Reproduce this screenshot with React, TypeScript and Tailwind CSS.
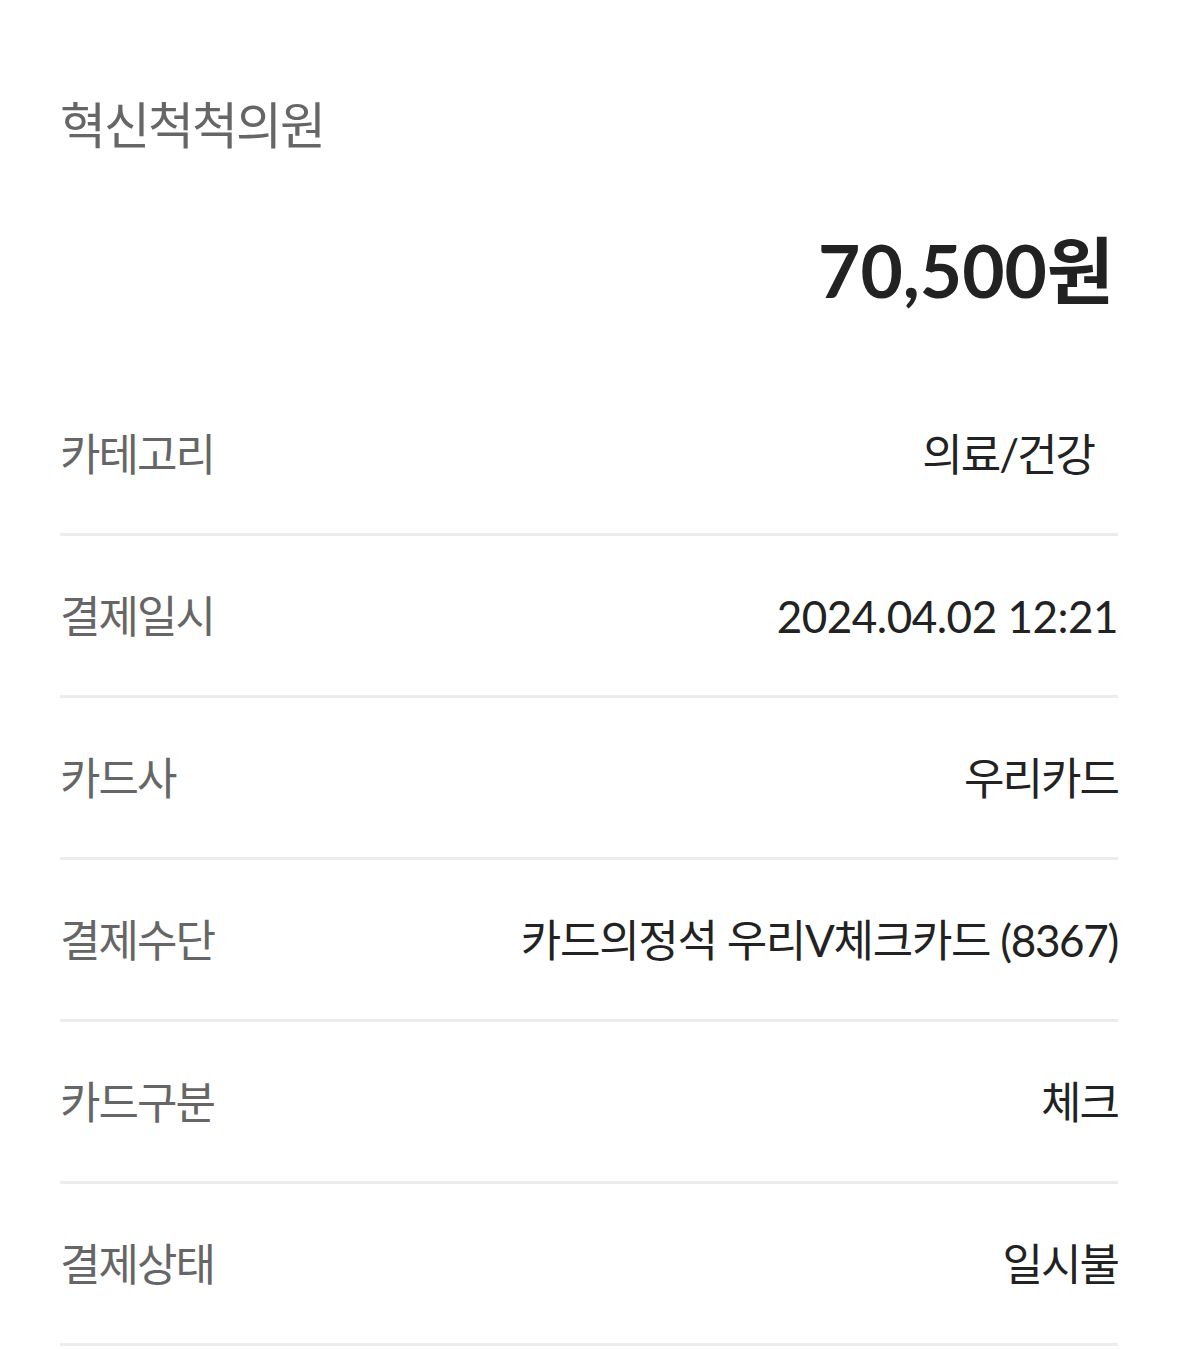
export default function App() {
  const rows: { label: string; value: string; cls: string }[] = [
    { label: "카테고리", value: "의료/건강", cls: "tracking-[-2px] mr-[24px]" },
    { label: "결제일시", value: "2024.04.02 12:21", cls: "tracking-[-0.5px]" },
    { label: "카드사", value: "우리카드", cls: "tracking-[-2px]" },
    { label: "결제수단", value: "카드의정석 우리V체크카드 (8367)", cls: "tracking-[-1.3px]" },
    { label: "카드구분", value: "체크", cls: "tracking-[-2px]" },
    { label: "결제상태", value: "일시불", cls: "tracking-[-2px]" },
  ];
  return (
    <div
      className="w-[1179px] min-h-[1349px] bg-white pl-[60px] pr-[61px] pt-[95px]"
      style={{ fontFamily: "Lato, 'Noto Sans CJK KR', sans-serif" }}
    >
      <div className="text-[50px] leading-[60px] tracking-[-2px] text-[#666666]">혁신척척의원</div>
      <div className="mt-[70px] flex justify-end">
        <div className="text-[73px] leading-[90px] font-bold text-[#222222] mr-[4px]">70,500원</div>
      </div>
      <div className="mt-[59px] flex flex-col">
        {rows.map((r) => (
          <div
            key={r.label}
            className="h-[162px] flex items-center justify-between border-b-[3px] border-[#ececec]"
          >
            <span className="text-[44px] text-[#666666] leading-none tracking-[-2px]">{r.label}</span>
            <span className={"text-[44px] text-[#222222] leading-none " + r.cls}>{r.value}</span>
          </div>
        ))}
      </div>
    </div>
  );
}
